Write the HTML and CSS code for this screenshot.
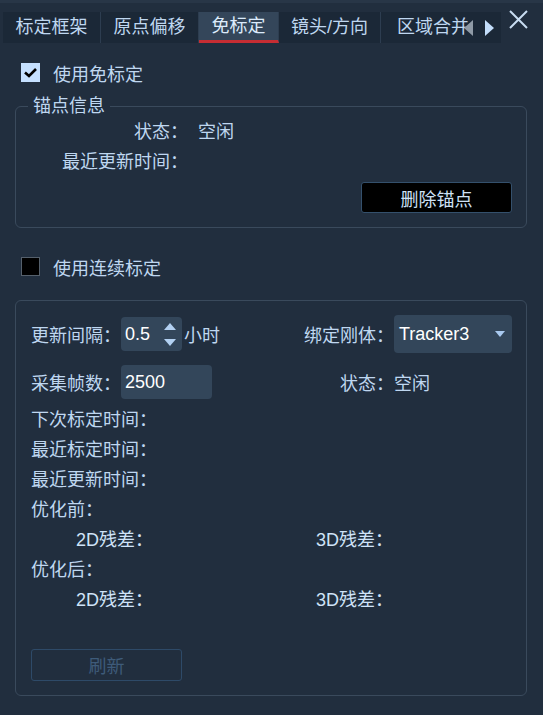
FILE: index.html
```html
<!DOCTYPE html>
<html lang="zh-CN">

<head>
    <meta charset="UTF-8">
    <meta name="viewport" content="width=device-width, initial-scale=1.0">
    <title>免标定</title>
    <link rel="stylesheet" href="styles.css">
</head>

<body>
    <div class="ventana">
        <!-- Barra de pestañas -->
        <div class="cabecera">
            <div class="pestanas">
                <div class="pestana" style="width: 98px">标定框架</div>
                <div class="pestana" style="width: 98px">原点偏移</div>
                <div class="pestana activa" style="width: 80px">免标定</div>
                <div class="pestana" style="width: 102px">镜头/方向</div>
                <div class="pestana ultima">区域合并</div>
                <div class="flechas">
                    <svg width="9" height="16" viewBox="0 0 9 16"><polygon points="9,0 9,16 0,8" fill="#8f9aa6"/></svg>
                    <svg width="9" height="16" viewBox="0 0 9 16"><polygon points="0,0 0,16 9,8" fill="#c3ddfa"/></svg>
                </div>
            </div>
            <div class="cerrar">
                <svg width="19" height="19" viewBox="0 0 19 19"><path d="M1 1 L18 18 M18 1 L1 18" stroke="#c9ddf2" stroke-width="2"/></svg>
            </div>
        </div>

        <div class="fila-check primera">
            <span class="check marcado">
                <svg width="19" height="19" viewBox="0 0 19 19"><path d="M4 9.5 L8 13 L15 6" fill="none" stroke="#000" stroke-width="2.6"/></svg>
            </span>
            <span>使用免标定</span>
        </div>

        <div class="grupo ancla">
            <div class="grupo-titulo">锚点信息</div>
            <div class="form-ancla">
                <span class="etiqueta">状态：</span><span class="valor">空闲</span>
                <span class="etiqueta">最近更新时间：</span><span class="valor"></span>
            </div>
            <div class="fila-boton">
                <button class="boton-negro">删除锚点</button>
            </div>
        </div>

        <div class="fila-check segunda">
            <span class="check"></span>
            <span>使用连续标定</span>
        </div>

        <div class="grupo continuo">
            <div class="rejilla">
                <span>更新间隔：</span>
                <div class="celda">
                    <div class="spin">
                        <span>0.5</span>
                        <div class="spin-flechas">
                            <svg width="12" height="7" viewBox="0 0 12 7"><polygon points="0,7 12,7 6,0" fill="#b3d1f2"/></svg>
                            <svg width="12" height="7" viewBox="0 0 12 7"><polygon points="0,0 12,0 6,7" fill="#b3d1f2"/></svg>
                        </div>
                    </div>
                    <span class="unidad">小时</span>
                </div>
                <span class="der">绑定刚体：</span>
                <div class="combo">
                    <span>Tracker3</span>
                    <svg width="10" height="6" viewBox="0 0 10 6"><polygon points="0,0 10,0 5,6" fill="#a9c9ef"/></svg>
                </div>

                <span>采集帧数：</span>
                <div class="celda"><div class="entrada">2500</div></div>
                <span class="der">状态：</span>
                <span>空闲</span>
            </div>

            <div class="lista">
                <div class="linea">下次标定时间：</div>
                <div class="linea">最近标定时间：</div>
                <div class="linea">最近更新时间：</div>
                <div class="linea">优化前：</div>
                <div class="linea residuo"><span class="col">2D残差：</span><span>3D残差：</span></div>
                <div class="linea">优化后：</div>
                <div class="linea residuo"><span class="col">2D残差：</span><span>3D残差：</span></div>
            </div>

            <button class="boton-apagado">刷新</button>
        </div>
    </div>
</body>

</html>
```

FILE: styles.css
```css
body {
    margin: 0;
    background-color: #212e3e;
    font-family: 'Liberation Sans', 'Noto Sans CJK SC', sans-serif;
    font-size: 18px;
    color: #bfd7f0;
    width: 543px;
    height: 715px;
    overflow: hidden;
}

.ventana {
    height: 712px;
    border-top: 3px solid #283647;
}

/* Pestañas */
.cabecera {
    display: flex;
    align-items: flex-start;
}

.pestanas {
    display: flex;
    position: relative;
    margin-top: 9px;
    margin-left: 3px;
    width: 498px;
    height: 31px;
    background-color: #1b2837;
    overflow: hidden;
}

.pestana {
    flex: none;
    height: 31px;
    line-height: 30px;
    text-align: center;
    border-right: 1px solid #2d3d50;
    box-sizing: border-box;
    white-space: nowrap;
}

.pestana.activa {
    background-color: #34465a;
    color: #dcebfb;
    border-bottom: 3px solid #c62d33;
    line-height: 28px;
}

.pestana.ultima {
    border-right: none;
    padding-left: 16px;
    text-align: left;
}

.flechas {
    position: absolute;
    right: 0;
    top: 0;
    width: 39px;
    height: 31px;
    display: flex;
    align-items: center;
    gap: 12px;
    padding-left: 2px;
    box-sizing: border-box;
}

.cerrar {
    margin-left: 8px;
    margin-top: 7px;
    width: 19px;
    height: 19px;
}

/* Casillas */
.fila-check {
    display: flex;
    align-items: center;
    gap: 13px;
    padding-left: 21px;
    height: 19px;
}

.fila-check.primera {
    margin-top: 20px;
}

.fila-check.segunda {
    margin-top: 29px;
}

.check {
    width: 19px;
    height: 19px;
    box-sizing: border-box;
    background-color: #000;
    border: 1px solid #55606c;
}

.check.marcado {
    background-color: #c5e0ff;
    border: none;
}

/* Grupos */
.grupo {
    position: relative;
    margin: 24px 16px 0 15px;
    border: 1px solid #3a4a5c;
    border-radius: 6px;
}

.grupo-titulo {
    position: absolute;
    top: -14px;
    left: 12px;
    padding: 0 5px;
    background-color: #212e3e;
    line-height: 26px;
}

.form-ancla {
    display: grid;
    grid-template-columns: 126px auto;
    column-gap: 10px;
    padding: 10px 0 0 46px;
}

.form-ancla span {
    height: 30px;
    line-height: 30px;
}

.form-ancla .etiqueta {
    text-align: right;
}

.fila-boton {
    display: flex;
    justify-content: flex-end;
    padding: 5px 14px 14px 0;
}

.boton-negro {
    width: 151px;
    height: 31px;
    background-color: #000;
    color: #cfe2f6;
    border: 1px solid #34506c;
    border-radius: 3px;
    font-family: inherit;
    font-size: 18px;
    padding: 0;
}

.continuo {
    padding: 14px 14px 14px 15px;
}

.rejilla {
    display: grid;
    grid-template-columns: 90px 1fr auto 118px;
    grid-template-rows: 38px 34px;
    row-gap: 12px;
    align-items: center;
}

.celda {
    display: flex;
    align-items: center;
}

.der {
    justify-self: end;
}

.spin {
    display: flex;
    align-items: center;
    justify-content: space-between;
    width: 61px;
    height: 34px;
    box-sizing: border-box;
    padding: 0 6px 0 4px;
    background-color: #33465a;
    border-radius: 4px;
    color: #fff;
}

.spin-flechas {
    display: flex;
    flex-direction: column;
    gap: 9px;
}

.unidad {
    margin-left: 2px;
}

.combo {
    display: flex;
    align-items: center;
    justify-content: space-between;
    height: 38px;
    padding: 0 7px 0 5px;
    background-color: #33465a;
    border-radius: 4px;
    color: #fff;
}

.entrada {
    width: 91px;
    height: 34px;
    line-height: 34px;
    box-sizing: border-box;
    padding-left: 4px;
    background-color: #33465a;
    border-radius: 4px;
    color: #fff;
}

.lista {
    margin-top: 6px;
}

.linea {
    height: 30px;
    line-height: 30px;
    display: flex;
}

.residuo {
    padding-left: 45px;
    color: #cfe3f8;
}

.residuo .col {
    width: 240px;
}

.boton-apagado {
    display: block;
    margin-top: 34px;
    width: 151px;
    height: 32px;
    background: transparent;
    border: 1px solid #2e4a68;
    border-radius: 3px;
    color: #3e5b79;
    font-family: inherit;
    font-size: 18px;
    padding: 0;
}
```
